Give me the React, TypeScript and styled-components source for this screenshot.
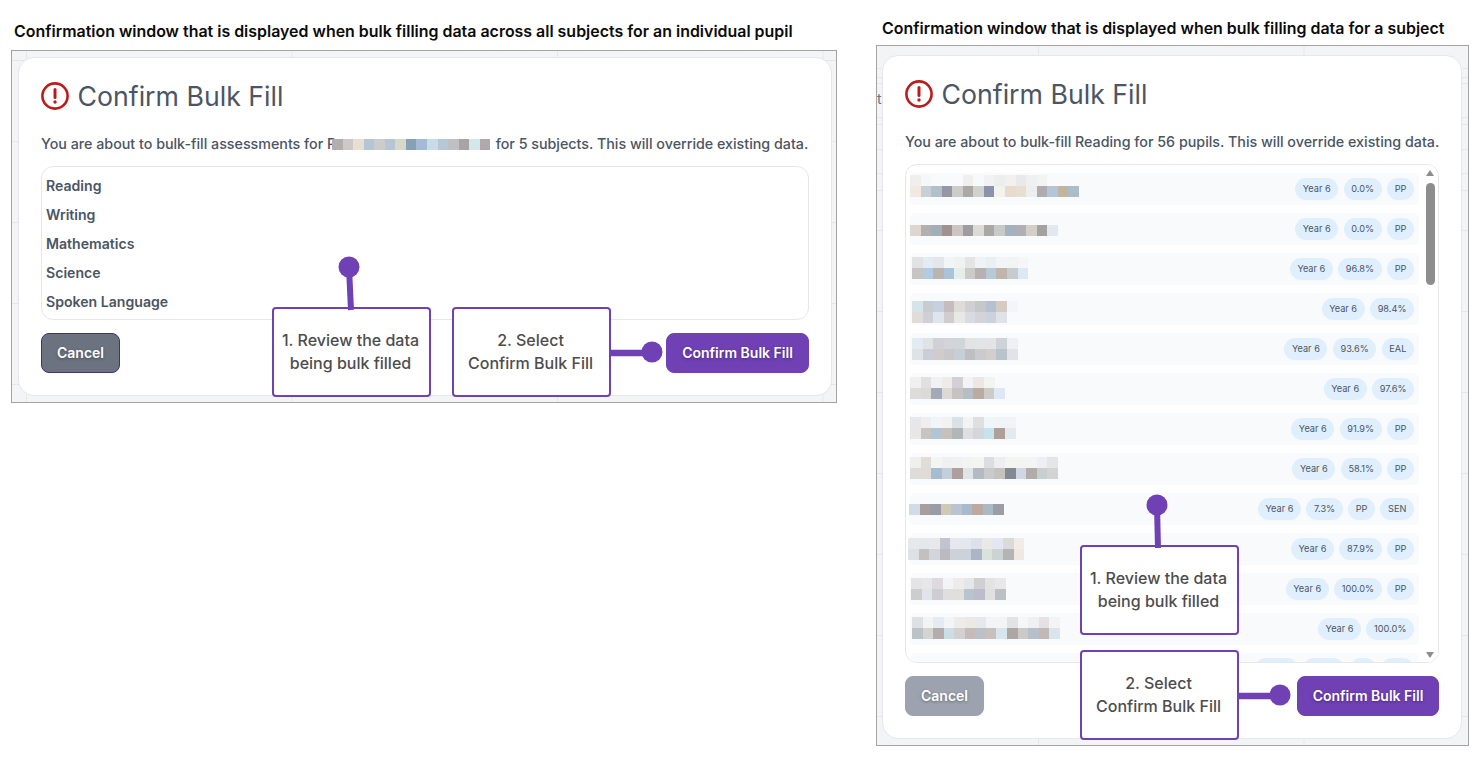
import React from "react";
import styled, { createGlobalStyle, css } from "styled-components";

const purple = "#7040b5";
const CELL_W = 10.56;
const CELL_H = 11;

const GlobalStyle = createGlobalStyle`
  html, body {
    margin: 0;
    padding: 0;
    background: #ffffff;
    font-family: Inter, "Noto Sans", "Liberation Sans", sans-serif;
  }
`;

const Page = styled.div`
  display: flex;
  align-items: flex-start;
  width: 1481px;
  height: 776px;
  padding-left: 11px;
  box-sizing: border-box;
  overflow: hidden;
`;

const LeftColumn = styled.section`
  width: 826px;
  margin-right: 39px;
  padding-top: 21px;
`;

const RightColumn = styled.section`
  width: 593px;
  padding-top: 18px;
`;

const Heading = styled.h2`
  margin: 0 0 7px 3px;
  font-size: 15.94px;
  line-height: 22px;
  font-weight: 600;
  color: #0b0b0b;
  white-space: nowrap;
`;

const RightHeading = styled(Heading)`
  margin: 0 0 5px 6px;
`;

// faint table lines of the page behind the dialog
const gridLines = (x: number, y: number, extra: number[]) => css`
  background-image: ${extra.map((e) => `linear-gradient(transparent ${e}px, #e5e7eb ${e}px, #e5e7eb ${e + 1}px, transparent ${e + 1}px), `).join("")}linear-gradient(#e5e7eb 1px, transparent 1px), linear-gradient(90deg, #e5e7eb 1px, transparent 1px);
  background-size: ${extra.map(() => "100% 100%, ").join("")}100% 81px, 265.5px 100%;
  background-position: ${extra.map(() => "0 0, ").join("")}0 ${y}px, ${x}px 0;
`;

const Panel = styled.div<{ $pad: string; $x: number; $y: number; $extra?: number[] }>`
  position: relative;
  box-sizing: border-box;
  border: 1px solid #a3a3a3;
  padding: ${(p) => p.$pad};
  background-color: #f3f4f6;
  ${(p) => gridLines(p.$x, p.$y, p.$extra ?? [])}
`;

const StrayLetter = styled.span`
  position: absolute;
  left: 0;
  top: 44px;
  font-size: 14px;
  line-height: 18px;
  color: #6b7280;
`;

const Dialog = styled.div<{ $height: number }>`
  box-sizing: border-box;
  display: flex;
  flex-direction: column;
  height: ${(p) => p.$height}px;
  padding: 0 22px;
  background: #ffffff;
  border: 1px solid #e5e7eb;
  border-radius: 16px;
`;

const TitleRow = styled.div`
  display: flex;
  align-items: center;
  gap: 8.5px;
  height: 34px;
  margin-top: 21px;
`;

const Title = styled.h3`
  margin: 0;
  font-size: 26.7px;
  line-height: 34px;
  font-weight: 400;
  color: #4b5563;
  white-space: nowrap;
`;

const Description = styled.p`
  display: flex;
  align-items: center;
  margin: 22px 0 13px;
  height: 18px;
  font-size: 14.27px;
  line-height: 18px;
  font-weight: 500;
  color: #4b5563;
  white-space: pre;
`;

const ListBox = styled.div<{ $height: number }>`
  position: relative;
  box-sizing: border-box;
  height: ${(p) => p.$height}px;
  border: 1px solid #e5e7eb;
  border-radius: 12px;
  overflow: hidden;
  flex: none;
`;

const SubjectList = styled.ul`
  list-style: none;
  margin: 0;
  padding: 4px 4px;
`;

const Subject = styled.li`
  height: 29px;
  font-size: 14.1px;
  line-height: 29px;
  font-weight: 600;
  color: #4b5563;
`;

const PupilList = styled.div`
  display: flex;
  flex-direction: column;
  gap: 8px;
  padding: 8px 19px 0 4px;
`;

const PupilRow = styled.div`
  flex: none;
  display: flex;
  align-items: center;
  justify-content: flex-end;
  gap: 5.4px;
  position: relative;
  height: 32px;
  padding-right: 5px;
  background: #f9fafb;
  border-radius: 6px;
`;

const Chip = styled.span<{ $width?: number }>`
  height: 22px;
  padding: 0 7.6px;
  ${(p) => p.$width && `box-sizing: border-box; width: ${p.$width}px;`}
  border-radius: 11px;
  background: #e0effe;
  font-size: 9.2px;
  line-height: 22px;
  font-weight: 400;
  color: #4b5563;
  white-space: nowrap;
`;

const NameMosaic = styled.svg<{ $x: number; $y: number }>`
  position: absolute;
  left: ${(p) => p.$x}px;
  top: ${(p) => p.$y}px;
  display: block;
`;

const InlineMosaic = styled.svg`
  display: block;
  flex: none;
  margin: 0 5.5px 0 -4.5px;
`;

const ScrollBar = styled.div`
  position: absolute;
  top: 0;
  right: 0;
  bottom: 0;
  width: 14px;
  background: #ffffff;
`;

const ScrollThumb = styled.div`
  position: absolute;
  top: 18px;
  left: 2px;
  width: 9px;
  height: 102px;
  border-radius: 4.5px;
  background: #8d8d8d;
`;

const ScrollArrow = styled.div<{ $down?: boolean }>`
  position: absolute;
  left: 2px;
  ${(p) => (p.$down ? "bottom: 4px;" : "top: 5px;")}
  width: 0;
  height: 0;
  border-left: 4.5px solid transparent;
  border-right: 4.5px solid transparent;
  ${(p) => (p.$down ? "border-top: 6px solid #8d8d8d;" : "border-bottom: 6px solid #8d8d8d;")}
`;

const Footer = styled.div`
  display: flex;
  justify-content: space-between;
  margin-top: 13px;
`;

const Button = styled.button`
  box-sizing: border-box;
  height: 40px;
  padding: 0 0 1px;
  border-radius: 8px;
  font-family: inherit;
  font-size: 14px;
  font-weight: 600;
  color: #ffffff;
  text-shadow: 0 1px 3px rgba(0, 0, 0, 0.35);
`;

const CancelButton = styled(Button)<{ $faded?: boolean }>`
  width: 79px;
  background: ${(p) => (p.$faded ? "#9ca3af" : "#6b7280")};
  border: 1px solid ${(p) => (p.$faded ? "#9ca3af" : "#41307a")};
`;

const ConfirmButton = styled(Button)<{ $width: number }>`
  width: ${(p) => p.$width}px;
  background: ${purple};
  border: 1px solid ${purple};
`;

const CalloutBox = styled.div<{ $left: number; $top: number }>`
  position: absolute;
  left: ${(p) => p.$left}px;
  top: ${(p) => p.$top}px;
  box-sizing: border-box;
  width: 159px;
  height: 90px;
  padding-right: 2px;
  display: flex;
  align-items: center;
  justify-content: center;
  text-align: center;
  background: #ffffff;
  border: 2px solid ${purple};
  border-radius: 4px;
  font-size: 16px;
  line-height: 23px;
  font-weight: 500;
  color: #4d4d4d;
`;

const UpConnector = styled.svg`
  position: absolute;
  left: 63px;
  top: -53px;
  overflow: visible;
`;

const SideConnector = styled.svg`
  position: absolute;
  left: 157px;
  top: 30px;
  overflow: visible;
`;

const AlertIcon = () => (
  <svg width="28" height="28" viewBox="0 0 28 28" fill="none">
    <circle cx="14" cy="14" r="12.6" stroke="#b91c1c" strokeWidth="2.6" />
    <path d="M14 7.5V15.5" stroke="#b91c1c" strokeWidth="3" strokeLinecap="round" />
    <circle cx="14" cy="20" r="1.7" fill="#b91c1c" />
  </svg>
);

const Cells = ({ rows }: { rows: string[][] }) => (
  <>
    {rows.map((cols, r) =>
      cols.map((fill, c) => (
        <rect key={`${r}-${c}`} x={c * CELL_W} y={r * CELL_H} width={CELL_W + 0.2} height={CELL_H} fill={`#${fill}`} />
      ))
    )}
  </>
);

const Mosaic = ({ rows, x, y }: { rows: string[]; x: number; y: number }) => {
  const parsed = rows.map((r) => r.split(" "));
  const cols = Math.max(...parsed.map((r) => r.length));
  return (
    <NameMosaic $x={x} $y={y} width={cols * CELL_W} height={parsed.length * CELL_H} shapeRendering="crispEdges">
      <Cells rows={parsed} />
    </NameMosaic>
  );
};

const RedactedName = ({ colours }: { colours: string }) => {
  const cols = colours.split(" ");
  return (
    <InlineMosaic width={cols.length * CELL_W} height={CELL_H} shapeRendering="crispEdges">
      <Cells rows={[cols]} />
    </InlineMosaic>
  );
};

const ConnectorUp = ({ dx }: { dx: number }) => (
  <UpConnector width="24" height="52">
    <line x1="12" y1="12" x2={12 + dx} y2="54" stroke={purple} strokeWidth="6" />
    <circle cx="12" cy="11" r="10.5" fill={purple} />
  </UpConnector>
);

const ConnectorSide = () => (
  <SideConnector width="52" height="24">
    <line x1="0" y1="14" x2="36" y2="14" stroke={purple} strokeWidth="6.5" />
    <circle cx="41" cy="13" r="10.5" fill={purple} />
  </SideConnector>
);

type Pupil = { x: number; y: number; cells: string[]; chips: string[] };

const pupils: Pupil[] = [
  { x: 0, y: 2, chips: ["Year 6", "0.0%", "PP"], cells: ["f0efee f4f8f8 f8fafb f8fafb f8fafb f1efec f8f9fb f2f2f3 eceeed f2f1ef e9e9e9 eef0f1 f2f4f2", "f2e9e0 c6d0d5 b2c0ca 9597a5 cccccb aaa9a5 d1d2cc 8d92ac f3f3ee e8dbcd e8dfd3 ecefee aeacb0 b2c6d8 c3b4a2 abbdc9"] },
  { x: 0, y: 12, chips: ["Year 6", "0.0%", "PP"], cells: ["ded5d0 b1afb0 a3afb8 a09291 ccc5c3 9d9ca3 dcdbd6 a9a8a3 c8cac8 a3b2bf b1afb6 d3cfc8 a5a1a3 e2e8ef"] },
  { x: 2, y: 4, chips: ["Year 6", "96.8%", "PP"], cells: ["e2e2e4 e2ecf5 e3e7eb f1f5f8 eff3f0 e5e4e4 f0f3f6 e8f0f3 f3f4f7 f3f3f5 f5f6f7", "c6c5c4 b0cce4 bcb4ae a9c3d9 e6eeea cdcac7 b9b0b1 b5c9d6 c0b5ab c6cccc dde8f5"] },
  { x: 2, y: 8, chips: ["Year 6", "98.4%"], cells: ["d6e3ea c6ccd0 c5d0e0 c4bcbe dedcd8 d0d0d2 c5c8c9 b5c0d0 d6cbc2 f4f5f8", "e0dcda d0cfd8 e0e4ef d3cccf e7e9e7 d9dbe2 d4d3d7 ccd2dc dfe2e6"] },
  { x: 2, y: 5, chips: ["Year 6", "93.6%", "EAL"], cells: ["e4eaf1 dfe3e3 d1d0d6 d3d3da d0d5dc e3e3e6 e3e4e7 e4e4e6 cdd3d8 eef0f6", "dee3e7 cccdd8 d1cbcb cac8ca c6cfd6 bfbec2 cdcacd d3cdcb b8c3cc e1e3e8"] },
  { x: 0, y: 4, chips: ["Year 6", "97.6%"], cells: ["eff0ef e2dfe0 f1f1f5 eeebe9 d2cfd5 f3f3f6 eee6e2 f3f4f2", "dedcda dcdad6 a2a9b9 dcdad6 c9c2c3 b5bdc7 baaca0 cdcbc5 dce8f5"] },
  { x: 0, y: 4, chips: ["Year 6", "91.9%", "PP"], cells: ["e7e7e9 eeeef0 f2f5f7 f2f2f3 dce1e5 f2f3f5 dedfe1 eef6fa f1f4f7 f2f3f5", "e7e7e8 c8c4c2 b1c5d4 c8c1ba b1b6bb dfdfe1 d5d6db c4e3ee ae9f99 e2eaef"] },
  { x: 0, y: 4, chips: ["Year 6", "58.1%", "PP"], cells: ["eff0ee e0dcd8 f3f5f3 eff0f2 f0f1f3 f3f3f0 f3f5f2 dcdde0 eceef0 f3f5f3 f3f5f3 f3f4f5 eeeff2 e4e5e7", "dedbd8 dedbd8 a6bcd0 c4cfdb ae9f9d dfe5e6 b4bac4 cacaca c6c3bf 838995 cfd6e4 b0aca8 c7d0cf d3d3d3"] },
  { x: -1, y: 11, chips: ["Year 6", "7.3%", "PP", "SEN"], cells: ["d0dce6 a89e9e 9a9ca5 cdcbb8 b9c4d0 a9bacc bca9a0 a9bac4 9b9ca5"] },
  { x: -2, y: 5, chips: ["Year 6", "87.9%", "PP"], cells: ["e6e8ee e6e7ea e7e8eb c3c3cf e5e8ee e4e7ee dde1ea e9eae6 e4e7ef dadada f2ece8", "dde0e5 c4c0c0 d2d5da bcb9c1 ccd2d7 ccd2dc adb4c3 d9e2dc ccd4d3 b4b4b4 f0e7e0"] },
  { x: 1, y: 5, chips: ["Year 6", "100.0%", "PP"], cells: ["e4e4e4 e7e7e9 ded9da f2f4f8 eeebe8 e4e7e9 d0cfd2 e3e3e3 e8e8ea", "cecdcd e1e4ea cfccd3 e1dedf dfe0db b7c4ce bcbccc e0e1df bcc0c3"] },
  { x: 2, y: 4, chips: ["Year 6", "100.0%"], cells: ["dde1e3 f3f3f3 e6ebf3 f3f4f6 efebe8 ece9e4 e6e9ec f3f4f6 f3f4f6 e3e3e3 f5f6f8 f0f0f2 e6e2e3 f4f4f5", "bcc3c6 d4d5d3 b5adab cbdde5 d3d1d0 c7bbba bdc0c9 c8c1ba d7e5ec aea6a2 cbcac8 b5c0cb c2b8b8 d9e4ec"] },
];

// the row cut off by the bottom of the list: only the tops of its chips show
const cutOffChips = [43, 41, 26, 33];

const subjects = ["Reading", "Writing", "Mathematics", "Science", "Spoken Language"];

export default function App() {
  return (
    <Page>
      <GlobalStyle />
      <LeftColumn>
        <Heading>Confirmation window that is displayed when bulk filling data across all subjects for an individual pupil</Heading>
        <Panel $pad="6px 4px 6px 6px" $x={14} $y={9}>
          <Dialog $height={339}>
            <TitleRow>
              <AlertIcon />
              <Title>Confirm Bulk Fill</Title>
            </TitleRow>
            <Description>
              {"You are about to bulk-fill assessments for R"}
              <RedactedName colours="b0aeae d0c8c8 e8dfd0 b2c6d6 ccccca b6c4d4 d8d8c8 86a0b8 a3bbd5 c8dce8 b6c8d6 c0c0c4 a8a4a4 d4e8ec b0a8ac" />
              {"for 5 subjects. This will override existing data."}
            </Description>
            <ListBox $height={154}>
              <SubjectList>
                {subjects.map((s) => (
                  <Subject key={s}>{s}</Subject>
                ))}
              </SubjectList>
            </ListBox>
            <Footer>
              <CancelButton>Cancel</CancelButton>
              <ConfirmButton $width={143}>Confirm Bulk Fill</ConfirmButton>
            </Footer>
          </Dialog>
          <CalloutBox $left={260} $top={256}>
            <ConnectorUp dx={2} />
            1. Review the data
            <br />
            being bulk filled
          </CalloutBox>
          <CalloutBox $left={440} $top={256}>
            <ConnectorSide />
            2. Select
            <br />
            Confirm Bulk Fill
          </CalloutBox>
        </Panel>
      </LeftColumn>
      <RightColumn>
        <RightHeading>Confirmation window that is displayed when bulk filling data for a subject</RightHeading>
        <Panel $pad="9px 6px 6px 5px" $x={161} $y={22} $extra={[31, 37, 71, 78, 127, 144]}>
          <StrayLetter>t</StrayLetter>
          <Dialog $height={684}>
            <TitleRow>
              <AlertIcon />
              <Title>Confirm Bulk Fill</Title>
            </TitleRow>
            <Description>You are about to bulk-fill Reading for 56 pupils. This will override existing data.</Description>
            <ListBox $height={499}>
              <PupilList>
                {pupils.map((p, i) => (
                  <PupilRow key={i}>
                    <Mosaic rows={p.cells} x={p.x} y={p.y} />
                    {p.chips.map((c) => (
                      <Chip key={c}>{c}</Chip>
                    ))}
                  </PupilRow>
                ))}
                <PupilRow>
                  {cutOffChips.map((w) => (
                    <Chip key={w} $width={w} />
                  ))}
                </PupilRow>
              </PupilList>
              <ScrollBar>
                <ScrollArrow />
                <ScrollThumb />
                <ScrollArrow $down />
              </ScrollBar>
            </ListBox>
            <Footer>
              <CancelButton $faded>Cancel</CancelButton>
              <ConfirmButton $width={142}>Confirm Bulk Fill</ConfirmButton>
            </Footer>
          </Dialog>
          <CalloutBox $left={203} $top={499}>
            <ConnectorUp dx={1} />
            1. Review the data
            <br />
            being bulk filled
          </CalloutBox>
          <CalloutBox $left={203} $top={604}>
            <ConnectorSide />
            2. Select
            <br />
            Confirm Bulk Fill
          </CalloutBox>
        </Panel>
      </RightColumn>
    </Page>
  );
}
